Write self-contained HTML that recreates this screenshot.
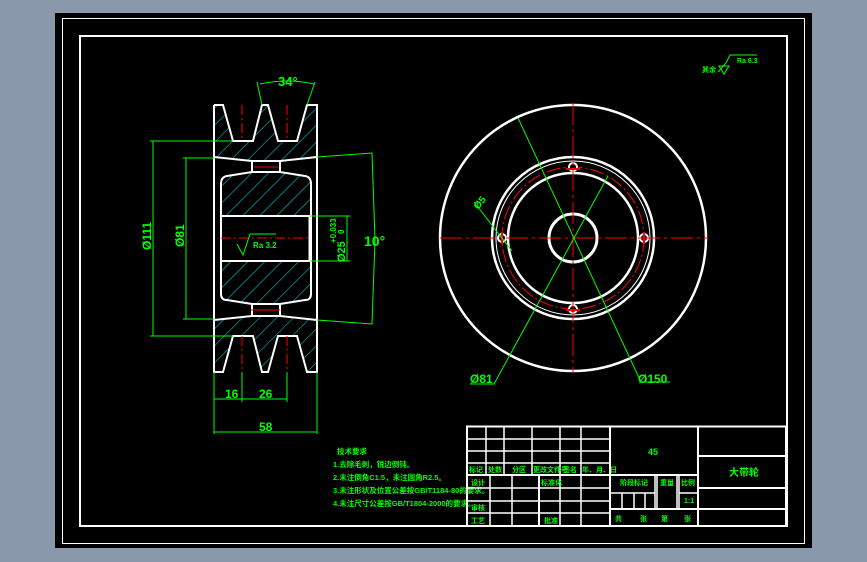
<!DOCTYPE html>
<html><head><meta charset="utf-8"><style>
body{margin:0;width:867px;height:562px;background:#8a98ac;overflow:hidden}
svg{position:absolute;left:0;top:0}
text{font-family:"Liberation Sans","Noto Sans CJK SC",sans-serif;fill:#00ff00;font-weight:bold}
</style></head><body>
<svg width="867" height="562" viewBox="0 0 867 562">
<defs>
<pattern id="h" width="12" height="12" patternUnits="userSpaceOnUse" patternTransform="rotate(45)">
<line x1="0" y1="0" x2="0" y2="12" stroke="#00ffff" stroke-width="0.9"/>
</pattern>
</defs>
<rect x="55" y="13" width="757" height="535" fill="#000"/>
<rect x="62.5" y="18.5" width="742" height="525" fill="none" stroke="#fff" stroke-width="1"/>
<rect x="80" y="36" width="707" height="490" fill="none" stroke="#fff" stroke-width="2"/>

<!-- LEFT VIEW -->
<g fill="url(#h)" stroke="none">
<polygon points="214,105 223,105 233,141 253,141 262,105 268,105 278,141 297,141 307,105 317,105 317,157 280,161 252,161 214,157"/>
<polygon points="214,372 223,372 233,336 253,336 262,372 268,372 278,336 297,336 307,372 317,372 317,320 280,316 252,316 214,320"/>
<path d="M227,176 L252,172 L280,172 L305,176 Q311,177 311,184 L311,216 L221,216 L221,184 Q221,177 227,176Z"/>
<path d="M221,261 L311,261 L311,294 Q311,300 305,300 L280,304 L252,304 L227,300 Q221,300 221,294Z"/>
</g>
<g fill="none" stroke="#fff" stroke-width="2">
<polyline points="214,105 223,105 233,141 253,141 262,105 268,105 278,141 297,141 307,105 317,105 317,372 307,372 297,336 278,336 268,372 262,372 253,336 233,336 223,372 214,372 214,105"/>
<path d="M214,157 L252,161 L252,172 L227,176 Q221,177 221,184 L221,294 Q221,300 227,300 L252,304 L252,316 L214,320"/>
<path d="M317,157 L280,161 L280,172 L305,176 Q311,177 311,184 L311,294 Q311,300 305,300 L280,304 L280,316 L317,320"/>
<line x1="252" y1="161" x2="280" y2="161"/><line x1="252" y1="172" x2="280" y2="172"/>
<line x1="252" y1="304" x2="280" y2="304"/><line x1="252" y1="316" x2="280" y2="316"/>
<line x1="221" y1="216" x2="311" y2="216"/><line x1="221" y1="261" x2="311" y2="261"/>
<line x1="310" y1="216" x2="310" y2="261" stroke-width="3"/>
</g>
<g stroke="#f00" stroke-width="1" stroke-dasharray="10,3,2,3">
<line x1="242" y1="105" x2="242" y2="141"/><line x1="287" y1="105" x2="287" y2="141"/>
<line x1="242" y1="336" x2="242" y2="372"/><line x1="287" y1="336" x2="287" y2="372"/>
<line x1="221" y1="238" x2="310" y2="238"/>
</g>
<line x1="254" y1="167" x2="278" y2="167" stroke="#f00"/><line x1="251" y1="310" x2="280" y2="310" stroke="#f00"/>
<g stroke="#0f0" stroke-width="1" fill="none">
<line x1="150" y1="141" x2="233" y2="141"/><line x1="150" y1="336" x2="233" y2="336"/>
<line x1="153" y1="141" x2="153" y2="336"/>
<line x1="183" y1="158" x2="214" y2="158"/><line x1="183" y1="319" x2="214" y2="319"/>
<line x1="186" y1="158" x2="186" y2="319"/>
<polyline points="317,157 372,153 375,240 372,324 317,320"/>
<line x1="310" y1="216" x2="350" y2="216"/><line x1="310" y1="261" x2="350" y2="261"/>
<line x1="347" y1="216" x2="347" y2="261"/>
<line x1="262" y1="105" x2="257" y2="82"/><line x1="307" y1="105" x2="315" y2="82"/>
<path d="M260,84 Q287,78 314,84"/>
<line x1="214" y1="372" x2="214" y2="434"/><line x1="317" y1="372" x2="317" y2="434"/>
<line x1="242" y1="372" x2="242" y2="402"/><line x1="287" y1="372" x2="287" y2="402"/>
<line x1="214" y1="399" x2="287" y2="399"/><line x1="214" y1="432" x2="317" y2="432"/>
<polyline points="237,244 243,255 250,234 276,234"/>
</g>
<text x="278" y="86" font-size="13">34°</text>
<text x="364" y="246" font-size="14">10°</text>
<text x="225" y="398" font-size="12">16</text>
<text x="259" y="398" font-size="12">26</text>
<text x="259" y="431" font-size="12">58</text>
<text x="253" y="248" font-size="8">Ra 3.2</text>
<text transform="translate(151,250) rotate(-90)" font-size="12">Ø111</text>
<text transform="translate(184,247) rotate(-90)" font-size="12">Ø81</text>
<text transform="translate(345,262) rotate(-90)" font-size="11">Ø25</text>
<text transform="translate(336,243) rotate(-90)" font-size="8">+0.033</text>
<text transform="translate(344,234) rotate(-90)" font-size="8">0</text>

<!-- RIGHT VIEW -->
<g fill="none" stroke="#fff">
<circle cx="573" cy="238" r="133" stroke-width="2.5"/>
<circle cx="573" cy="238" r="81" stroke-width="2.5"/>
<circle cx="573" cy="238" r="77" stroke-width="1"/>
<circle cx="573" cy="238" r="65" stroke-width="2.5"/>
<circle cx="573" cy="238" r="24" stroke-width="3"/>
</g>
<circle cx="573" cy="238" r="71" fill="none" stroke="#f00" stroke-width="1" stroke-dasharray="14,3,2,3"/>
<g fill="#000" stroke="#fff" stroke-width="2">
<circle cx="573" cy="167" r="4"/><circle cx="573" cy="309" r="4"/><circle cx="502" cy="238" r="4"/><circle cx="644" cy="238" r="4"/>
</g>
<g stroke="#f00" stroke-width="1">
<line x1="440" y1="238" x2="708" y2="238" stroke-dasharray="22,4,3,4"/>
<line x1="573" y1="103" x2="573" y2="373" stroke-dasharray="22,4,3,4"/>
<line x1="566" y1="169" x2="580" y2="169" stroke-width="2"/><line x1="566" y1="310" x2="580" y2="310" stroke-width="2"/>
<line x1="502" y1="232" x2="502" y2="244" stroke-width="2"/><line x1="644" y1="232" x2="644" y2="244" stroke-width="2"/>
</g>
<g stroke="#0f0" stroke-width="1" fill="none">
<polyline points="518,118 641,382 670,382"/>
<polyline points="608,176 494,384 470,384"/>
<line x1="474" y1="202" x2="512" y2="251"/>
<polyline points="718,72 726,63 730,55 757,55"/>
<polygon points="719,66 729,66 724,74"/>
</g>
<text x="638" y="383" font-size="12">Ø150</text>
<text x="470" y="383" font-size="12">Ø81</text>
<text transform="translate(478,210) rotate(-50)" font-size="10">Ø5</text>
<text x="702" y="72" font-size="7">其余</text>
<text x="737" y="63" font-size="7">Ra 6.3</text>

<!-- NOTES -->
<g font-size="7.5">
<text x="337" y="454">技术要求</text>
<text x="333" y="467">1.去除毛刺，锐边倒钝。</text>
<text x="333" y="480">2.未注倒角C1.5，未注圆角R2.5。</text>
<text x="333" y="493">3.未注形状及位置公差按GB/T1184-80的要求。</text>
<text x="333" y="506">4.未注尺寸公差按GB/T1804-2000的要求。</text>
</g>

<!-- TITLE BLOCK -->
<g stroke="#fff" fill="none">
<rect x="467" y="426.5" width="319" height="99.5" stroke-width="2"/>
<g stroke-width="1.5">
<line x1="467" y1="439" x2="609" y2="439"/><line x1="467" y1="451" x2="609" y2="451"/><line x1="467" y1="463" x2="609" y2="463"/>
<line x1="467" y1="475" x2="609" y2="475" stroke-width="2"/><line x1="467" y1="488" x2="609" y2="488"/><line x1="467" y1="501" x2="609" y2="501"/><line x1="467" y1="513" x2="609" y2="513"/>
<line x1="486" y1="426" x2="486" y2="475"/><line x1="504" y1="426" x2="504" y2="475"/><line x1="532" y1="426" x2="532" y2="475"/><line x1="560" y1="426" x2="560" y2="526"/><line x1="581" y1="426" x2="581" y2="526"/>
<line x1="490" y1="475" x2="490" y2="526"/><line x1="512" y1="475" x2="512" y2="526"/><line x1="539" y1="475" x2="539" y2="526" stroke-width="2"/>
<line x1="610" y1="426" x2="610" y2="526" stroke-width="2"/><line x1="698" y1="426" x2="698" y2="526" stroke-width="2"/>
<line x1="610" y1="475" x2="698" y2="475" stroke-width="2"/><line x1="610" y1="509" x2="786" y2="509" stroke-width="2"/>
<line x1="610" y1="493" x2="655" y2="493"/><line x1="679" y1="493" x2="698" y2="493"/>
<line x1="655" y1="475" x2="655" y2="509"/><line x1="657" y1="475" x2="657" y2="509"/><line x1="677" y1="475" x2="677" y2="509"/><line x1="679" y1="475" x2="679" y2="509"/>
<line x1="622" y1="493" x2="622" y2="509"/><line x1="634" y1="493" x2="634" y2="509"/><line x1="645" y1="493" x2="645" y2="509"/>
<line x1="698" y1="456" x2="786" y2="456" stroke-width="2"/><line x1="698" y1="488" x2="786" y2="488" stroke-width="2"/>
</g></g>
<g font-size="7">
<text x="469" y="472">标记</text><text x="488" y="472">处数</text><text x="512" y="472">分区</text><text x="533" y="472">更改文件号</text><text x="563" y="472">签名</text><text x="582" y="472">年、月、日</text>
<text x="471" y="485">设计</text><text x="541" y="485">标准化</text>
<text x="471" y="510">审核</text><text x="471" y="523">工艺</text><text x="544" y="523">批准</text>
<text x="620" y="485">阶段标记</text><text x="660" y="485">重量</text><text x="681" y="485">比例</text>
<text x="684" y="503">1:1</text>
<text x="615" y="521">共</text><text x="640" y="521">张</text><text x="661" y="521">第</text><text x="684" y="521">张</text>
</g>
<text x="648" y="455" font-size="9">45</text>
<text x="729" y="476" font-size="10">大带轮</text>
</svg>
</body></html>
